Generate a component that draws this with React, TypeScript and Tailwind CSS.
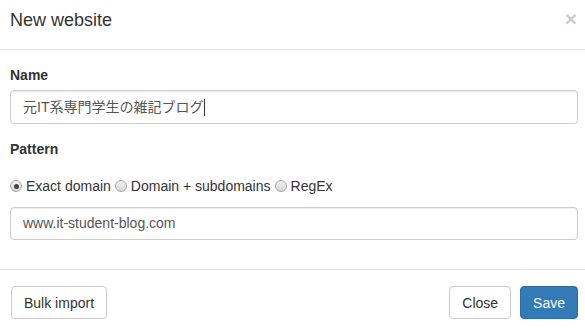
const font = { fontFamily: '"Liberation Sans", Arial, "Noto Sans CJK JP", sans-serif' };

const Radio = ({ checked = false }: { checked?: boolean }) => (
  <span className="inline-flex h-[12px] w-[12px] shrink-0 items-center justify-center rounded-full border border-[#a6a6a6] bg-gradient-to-b from-[#f2f2f2] to-[#d6d6d6]">
    {checked && <span className="h-[5px] w-[5px] rounded-full bg-[#444]" />}
  </span>
);

export default function App() {
  const patterns = [
    { label: 'Exact domain', checked: true },
    { label: 'Domain + subdomains', checked: false },
    { label: 'RegEx', checked: false },
  ];

  return (
    <div className="h-[332px] w-[585px] overflow-hidden bg-white text-[14px] text-[#333]" style={font}>
      {/* Header */}
      <div className="flex h-[50px] items-start justify-between border-b border-[#e5e5e5] pl-[10px] pr-[8px] pt-[7px]">
        <h4 className="text-[18px] leading-[26px]">New website</h4>
        <button className="mt-[-1px] text-[21px] font-bold leading-[26px] text-black opacity-20">×</button>
      </div>

      {/* Body */}
      <div className="pl-[10px] pr-[7px] pt-[15px] pb-[29px]">
        <label className="mb-[5px] block font-bold leading-5">Name</label>
        <div className="flex h-[34px] items-center rounded-[4px] border border-[#ccc] px-[12px] text-[#555] shadow-[inset_0_1px_1px_rgba(0,0,0,0.075)]">
          <span>元IT系専門学生の雑記ブログ</span>
          <span className="ml-[1px] h-[17px] w-px bg-[#333]" />
        </div>

        <label className="mt-[15px] block font-bold leading-5">Pattern</label>
        <div className="mt-[17px] flex h-5 items-center">
          {patterns.map((p) => (
            <label key={p.label} className="mr-[4px] flex items-center gap-[4px]">
              <Radio checked={p.checked} />
              <span className="leading-5">{p.label}</span>
            </label>
          ))}
        </div>
        <div className="mt-[11px] flex h-[33px] items-center rounded-[4px] border border-[#ccc] px-[12px] text-[#555] shadow-[inset_0_1px_1px_rgba(0,0,0,0.075)]">
          www.it-student-blog.com
        </div>
      </div>

      {/* Footer */}
      <div className="flex items-center justify-between border-t border-[#e5e5e5] pl-[11px] pr-[7px] pt-[16px]">
        <button className="h-[33px] rounded-[4px] border border-[#ccc] bg-white px-[12px] leading-5 text-[#333]">Bulk import</button>
        <div className="flex gap-[9px]">
          <button className="h-[33px] rounded-[4px] border border-[#ccc] bg-white px-[12px] leading-5 text-[#333]">Close</button>
          <button className="h-[33px] rounded-[4px] border border-[#2e6da4] bg-[#337ab7] px-[12px] leading-5 text-white">Save</button>
        </div>
      </div>
    </div>
  );
}
